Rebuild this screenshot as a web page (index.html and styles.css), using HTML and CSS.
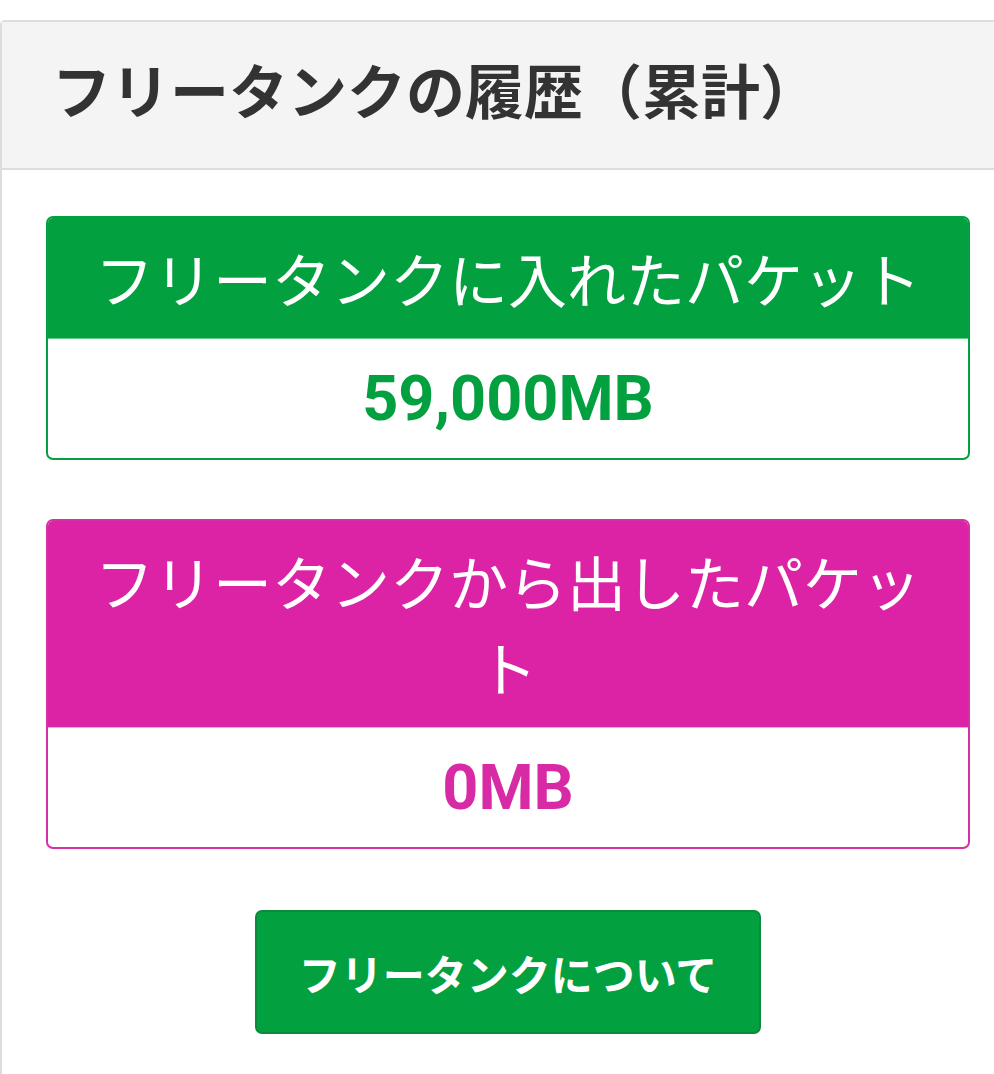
FILE: index.html
```html
<!DOCTYPE html>
<html lang="ja">
<head>
<meta charset="utf-8">
<title>フリータンクの履歴（累計）</title>
<link rel="stylesheet" href="styles.css">
</head>
<body>
<section class="panel">
  <header class="panel-head">
    <h2 class="panel-title">フリータンクの履歴（累計）</h2>
  </header>
  <div class="panel-body">
    <div class="stat stat-in">
      <div class="stat-head">フリータンクに入れたパケット</div>
      <div class="stat-value">59,000MB</div>
    </div>
    <div class="stat stat-out">
      <div class="stat-head">フリータンクから出したパケット</div>
      <div class="stat-value">0MB</div>
    </div>
    <div class="actions">
      <a class="btn" href="#">フリータンクについて</a>
    </div>
  </div>
</section>
</body>
</html>
```

FILE: styles.css
```css
* { box-sizing: border-box; }
html, body { margin: 0; padding: 0; background: #fff; overflow-x: hidden; }
body {
  font-family: "Noto Sans CJK JP", "Noto Sans", sans-serif;
  padding-top: 20px;
}
.panel {
  width: 1010px;
  border: 2px solid #dddddd;
  border-radius: 5px 0 0 0;
  background: #fff;
}
.panel-head {
  background: #f4f4f4;
  border-bottom: 2px solid #dddddd;
  padding: 0 44px 12px 50px;
  height: 148px;
  display: flex;
  align-items: center;
}
.panel-title {
  margin: 0;
  font-size: 59px;
  font-weight: 700;
  color: #333333;
  line-height: 1.2;
  letter-spacing: 0;
}
.panel-body {
  padding: 46px 0 80px 44px;
  width: 970px;
}
.stat {
  width: 924px;
  border: 2px solid #03a03f;
  border-radius: 7px;
  overflow: hidden;
  margin-bottom: 59px;
}
.stat-head {
  background: #03a03f;
  color: #fff;
  text-align: center;
  font-size: 59px;
  line-height: 86px;
  padding: 17px 30px;
  font-weight: 400;
}
.stat-value {
  text-align: center;
  font-family: Roboto, "Noto Sans", sans-serif;
  font-weight: 700;
  font-size: 63px;
  color: #03a03f;
  height: 120px;
  display: flex;
  align-items: center;
  justify-content: center;
  border-top: 1px solid #5fcf8a;
}
.stat-out { border-color: #d630a6; }
.stat-out .stat-head { background: #dc23a5; }
.stat-out .stat-value { color: #d92aa5; border-top-color: #f0a6da; }
.actions {
  display: flex;
  justify-content: center;
  width: 924px;
  padding-top: 2px;
}
.btn {
  display: flex;
  align-items: center;
  justify-content: center;
  width: 506px;
  height: 124px;
  background: #03a03f;
  border: 2px solid #0a8a3a;
  border-radius: 7px;
  color: #fff;
  font-weight: 700;
  font-size: 42px;
  text-decoration: none;
}
```
